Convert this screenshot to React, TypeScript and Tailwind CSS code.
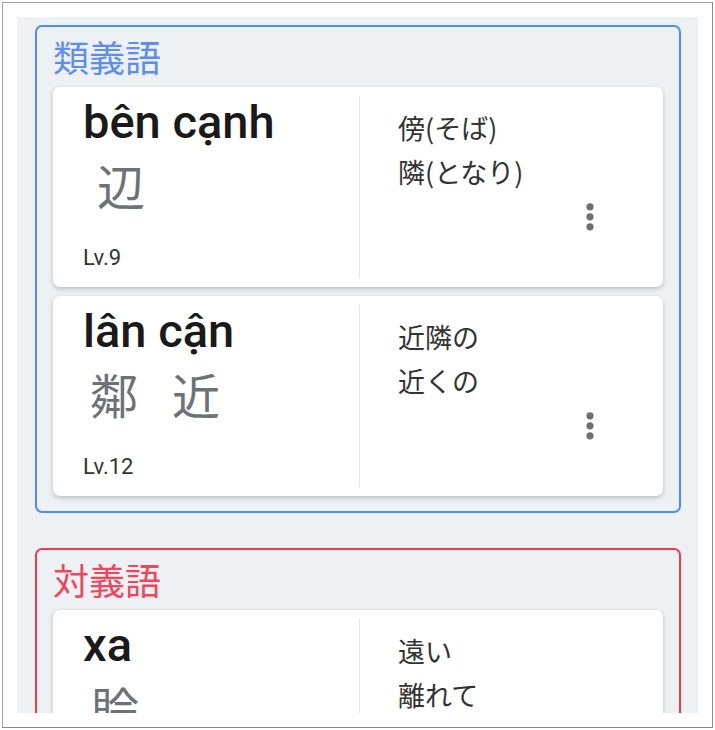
import React from "react";

type Word = {
  word: string;
  kanji: string[];
  kanjiPad: string;
  level?: string;
  meanings: string[];
};

const Dots = () => (
  <svg width="8" height="28" viewBox="0 0 8 28" className="block">
    <circle cx="4" cy="3.8" r="3.6" fill="#6f6f6f" />
    <circle cx="4" cy="13.8" r="3.6" fill="#6f6f6f" />
    <circle cx="4" cy="23.8" r="3.6" fill="#6f6f6f" />
  </svg>
);

const Card = ({ w }: { w: Word }) => (
  <div className="flex h-[200px] shrink-0 rounded-[7px] bg-white shadow-[0_2px_5px_rgba(0,0,0,0.22)]">
    <div className="flex w-[306px] flex-col pl-[30px]">
      <div className="pt-[12px] text-[47px] leading-[46px] font-medium text-[#1a1a1a] [font-family:Roboto,'Liberation_Sans',sans-serif]">
        {w.word}
      </div>
      <div
        className={`mt-[15px] flex gap-[34px] text-[48px] leading-[48px] text-[#6d7276] [font-family:'Noto_Sans_CJK_JP',sans-serif] ${w.kanjiPad}`}
      >
        {w.kanji.map((k) => (
          <span key={k}>{k}</span>
        ))}
      </div>
      {w.level && (
        <div className="mt-[39px] text-[22px] leading-[22px] text-[#333] [font-family:Roboto,'Liberation_Sans',sans-serif]">
          {w.level}
        </div>
      )}
    </div>
    <div className="my-[9px] flex flex-1 flex-col border-l border-[#e6e6e6] pl-[38px]">
      <div className="pt-[10px] text-[27px] leading-[44px] text-[#333] [font-family:'Noto_Sans_CJK_JP',sans-serif]">
        {w.meanings.map((m) => (
          <div key={m}>{m}</div>
        ))}
      </div>
      <div className="mt-[9px] flex justify-end pr-[69px]">
        <Dots />
      </div>
    </div>
  </div>
);

const Section = ({
  title,
  border,
  color,
  words,
  className,
}: {
  title: string;
  border: string;
  color: string;
  words: Word[];
  className?: string;
}) => (
  <div className={`shrink-0 rounded-[7px] border-2 px-[16px] pb-[15px] pt-[8px] ${border} ${className ?? ""}`}>
    <div className={`text-[36px] leading-[43px] [font-family:'Noto_Sans_CJK_JP',sans-serif] ${color}`}>{title}</div>
    <div className="mt-[9px] flex flex-col gap-[9px]">
      {words.map((w) => (
        <Card key={w.word} w={w} />
      ))}
    </div>
  </div>
);

export default function App() {
  const synonyms: Word[] = [
    { word: "bên cạnh", kanji: ["辺"], kanjiPad: "pl-[14px]", level: "Lv.9", meanings: ["傍(そば)", "隣(となり)"] },
    { word: "lân cận", kanji: ["鄰", "近"], kanjiPad: "pl-[7px]", level: "Lv.12", meanings: ["近隣の", "近くの"] },
  ];
  const antonyms: Word[] = [
    { word: "xa", kanji: ["賒"], kanjiPad: "pl-[8px]", meanings: ["遠い", "離れて"] },
  ];
  return (
    <div className="h-[730px] w-[715px] bg-white pl-[2px] pt-[2px]">
      <div className="h-[726px] w-[711px] border border-[#a3a3a3] border-r-[#8a8a8a] border-b-[#8a8a8a] bg-white p-[14px]">
        <div className="flex h-[696px] w-[681px] flex-col overflow-hidden bg-[#eef1f4] pl-[18px] pr-[17px] pt-[8px]">
          <Section title="類義語" border="border-[#4f8cf3]" color="text-[#5b8ef0]" words={synonyms} />
          <Section title="対義語" border="border-[#f5384f]" color="text-[#f2455c]" words={antonyms} className="mt-[35px]" />
        </div>
      </div>
    </div>
  );
}
